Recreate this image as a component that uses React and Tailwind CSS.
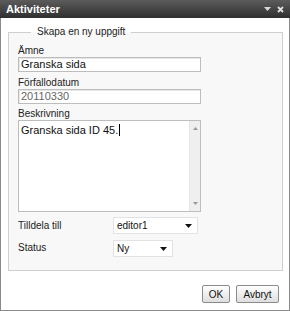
const font = { fontFamily: '"Liberation Sans", Arial, sans-serif' };

const Field = ({ label, value, muted, className = '' }) => (
    <div className={className}>
        <div className="text-[10px] leading-[13px] text-[#222]">{label}</div>
        <div className="h-[15px] w-[183px] border border-[#bdbdbd] bg-white pl-[2px] text-[11px] leading-[13px] shadow-[inset_1px_1px_0_#e6e6e6]">
            <span className={muted ? 'text-[#666]' : 'text-[#111]'}>{value}</span>
        </div>
    </div>
);

const Caret = () => (
    <svg width="7" height="4" viewBox="0 0 7 4" className="shrink-0">
        <path d="M0 0h7L3.5 4z" fill="#111" />
    </svg>
);

const Dropdown = ({ value, width }) => (
    <div
        className={`flex h-[17px] items-center justify-between border border-[#e2e2e2] bg-white pl-[3px] pr-[5px] text-[10px] text-[#111] ${width}`}
    >
        <span>{value}</span>
        <Caret />
    </div>
);

export default function App() {
    return (
        <div className="w-[290px] h-[311px] bg-white" style={font}>
            <div className="flex h-[18px] items-center justify-between bg-gradient-to-b from-[#5c5c5c] to-[#2f2f2f] px-[6px]">
                <span className="text-[11px] font-bold text-white">Aktiviteter</span>
                <div className="flex items-center gap-[6px] pr-[0px]">
                    <svg width="7" height="4" viewBox="0 0 7 4">
                        <path d="M0 0h7L3.5 4z" fill="#d8d8d8" />
                    </svg>
                    <svg width="7" height="7" viewBox="0 0 7 7">
                        <path d="M1 1l5 5M6 1l-5 5" stroke="#e0e0e0" strokeWidth="1.8" />
                    </svg>
                </div>
            </div>
            <div className="flex h-[293px] flex-col border-x border-b border-[#8a8a8a]">
                <fieldset className="ml-[7px] mr-[6px] mt-[8px] border border-[#cfcfcf] bg-[#f8f8f8] px-[9px] pb-[13px]">
                    <legend className="ml-[13px] px-[6px] text-[10px] leading-[12px] text-[#222]">Skapa en ny uppgift</legend>
                    <Field label="Ämne" value="Granska sida" className="mt-[6px]" />
                    <Field label="Förfallodatum" value="20110330" muted className="mt-[4px]" />
                    <div className="mt-[3px]">
                        <div className="text-[10px] leading-[13px] text-[#222]">Beskrivning</div>
                        <div className="flex h-[92px] w-[183px] border border-[#bdbdbd] bg-white">
                            <div className="flex-1 pl-[2px] pt-[1px] text-[11px] leading-[13px] text-[#111]">
                                Granska sida ID 45.
                                <span className="ml-[1px] inline-block h-[12px] w-px translate-y-[2px] bg-black" />
                            </div>
                            <div className="flex w-[11px] flex-col items-center justify-between border-l border-[#e4e4e4] bg-[#efefef] py-[6px]">
                                <svg width="5" height="3" viewBox="0 0 5 3">
                                    <path d="M0 3h5L2.5 0z" fill="#999" />
                                </svg>
                                <svg width="5" height="3" viewBox="0 0 5 3">
                                    <path d="M0 0h5L2.5 3z" fill="#999" />
                                </svg>
                            </div>
                        </div>
                    </div>
                    <div className="mt-[5px] flex items-start">
                        <span className="w-[95px] pt-[2px] text-[10px] leading-[13px] text-[#222]">Tilldela till</span>
                        <Dropdown value="editor1" width="w-[85px]" />
                    </div>
                    <div className="mt-[6px] flex items-start">
                        <span className="w-[95px] pt-[1px] text-[10px] leading-[13px] text-[#222]">Status</span>
                        <Dropdown value="Ny" width="w-[60px] h-[16px]" />
                    </div>
                </fieldset>
                <div className="mt-[14px] mr-[10px] flex justify-end gap-[6px]">
                    <button className="h-[18px] w-[28px] rounded-[2px] border border-[#8c8c8c] bg-gradient-to-b from-white to-[#dedede] text-[10px] text-[#111]">
                        OK
                    </button>
                    <button className="h-[18px] w-[43px] rounded-[2px] border border-[#8c8c8c] bg-gradient-to-b from-white to-[#dedede] text-[10px] text-[#111]">
                        Avbryt
                    </button>
                </div>
            </div>
        </div>
    );
}
